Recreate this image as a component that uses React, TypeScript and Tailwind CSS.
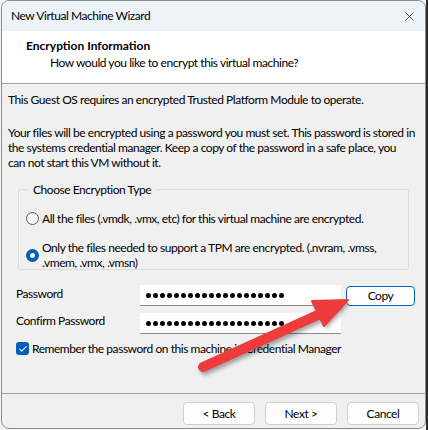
import { X, Check } from "lucide-react";

function Dots() {
  return (
    <div className="flex gap-[2px] items-center">
      {Array.from({ length: 20 }).map((_, i) => (
        <div key={i} className="w-[5px] h-[5px] rounded-full bg-black" />
      ))}
    </div>
  );
}

function Radio({ checked }: { checked?: boolean }) {
  if (checked) {
    return (
      <div className="w-[13px] h-[13px] rounded-full bg-[#005fb8] flex items-center justify-center shrink-0">
        <div className="w-[5px] h-[5px] rounded-full bg-white" />
      </div>
    );
  }
  return <div className="w-[13px] h-[13px] rounded-full border border-[#5a5a5a] bg-[#f6f6f6] shrink-0" />;
}

function WizardButton({ label }: { label: string }) {
  return (
    <button className="w-[72px] h-[23px] rounded-[4px] border border-[#d0d0d0] bg-[#fdfdfd] text-[12px] leading-none">
      {label}
    </button>
  );
}

export default function App() {
  return (
    <div className="relative w-[428px] h-[430px] bg-[#f3f3f3] flex font-['Lato',sans-serif] text-[12px] tracking-[-0.45px] text-black">
      <div className="ml-[1px] w-[425px] h-[429px] border border-[#8c8c8c] rounded-[8px] overflow-hidden flex flex-col bg-[#f0f0f0]">
        {/* title bar */}
        <div className="h-[30px] bg-[#edf3f8] flex items-center justify-between pl-[9px] pr-[8px]">
          <span className="text-[12px]">New Virtual Machine Wizard</span>
          <X size={15} strokeWidth={1.2} className="text-[#222]" />
        </div>

        {/* header */}
        <div className="h-[53px] bg-white border-b border-[#a0a0a0] pt-[7px] pl-[24px] leading-[16px]">
          <p className="font-bold tracking-[0px]">Encryption Information</p>
          <p className="pl-[24px] mt-[1px]">How would you like to encrypt this virtual machine?</p>
        </div>

        {/* body */}
        <div className="flex-1 flex flex-col pt-[8px] leading-[15px]">
          <p className="pl-[6px]">This Guest OS requires an encrypted Trusted Platform Module to operate.</p>
          <p className="pl-[6px] mt-[18px] whitespace-nowrap">
            Your files will be encrypted using a password you must set. This password is stored in
            <br />
            the systems credential manager. Keep a copy of the password in a safe place, you
            <br />
            can not start this VM without it.
          </p>

          <fieldset className="mx-[16px] mt-[12px] h-[88px] border border-[#dcdcdc] rounded-[2px] px-[14px]">
            <legend className="px-[6px] -ml-[6px]">Choose Encryption Type</legend>
            <div className="flex items-center gap-[3px] mt-[14px] -ml-[7px] whitespace-nowrap">
              <Radio />
              <span>All the files (.vmdk, .vmx, etc) for this virtual machine are encrypted.</span>
            </div>
            <div className="flex items-center gap-[3px] mt-[14px] -ml-[7px] whitespace-nowrap">
              <Radio checked />
              <span>
                Only the files needed to support a TPM are encrypted. (.nvram, .vmss,
                <br />
                .vmem, .vmx, .vmsn)
              </span>
            </div>
          </fieldset>

          <div className="flex items-start mt-[15px] pl-[14px]">
            <span className="w-[124px] pt-[1px]">Password</span>
            <div className="w-[201px] h-[21px] bg-white border-b border-[#8a8a8a] flex items-center pl-[6px]">
              <Dots />
            </div>
            <button className="ml-[5px] mt-[1px] w-[69px] h-[20px] rounded-[4px] border border-[#0067c0] bg-white leading-none">
              Copy
            </button>
          </div>

          <div className="flex items-start mt-[7px] pl-[14px]">
            <span className="w-[124px]">Confirm Password</span>
            <div className="w-[201px] h-[21px] bg-white border-b border-[#8a8a8a] flex items-center pl-[6px]">
              <Dots />
            </div>
          </div>

          <div className="flex items-center gap-[3px] mt-[7px] pl-[14px]">
            <div className="w-[13px] h-[13px] rounded-[3px] bg-[#005fb8] flex items-center justify-center">
              <Check size={10} strokeWidth={2.5} className="text-white" />
            </div>
            <span>Remember the password on this machine in Credential Manager</span>
          </div>
        </div>

        {/* footer */}
        <div className="h-[35px] border-t border-[#a0a0a0] flex justify-end items-start gap-[10px] pt-[8px] pr-[6px]">
          <WizardButton label="< Back" />
          <WizardButton label="Next >" />
          <WizardButton label="Cancel" />
        </div>
      </div>
      <div className="w-[2px] bg-[#2a2a2a]" />

      {/* annotation arrow */}
      <svg className="absolute left-0 top-0 pointer-events-none" width="428" height="430" viewBox="0 0 428 430">
        <defs>
          <filter id="sh" x="-20%" y="-20%" width="140%" height="140%">
            <feGaussianBlur stdDeviation="2" />
          </filter>
        </defs>
        <g transform="translate(2 3)" opacity="0.35" filter="url(#sh)">
          <line x1="203" y1="367" x2="322" y2="313" stroke="#000" strokeWidth="10" strokeLinecap="round" />
          <polygon points="348,300 312,301 324,326" fill="#000" />
        </g>
        <line x1="203" y1="367" x2="322" y2="313" stroke="#ee3b3b" strokeWidth="10" strokeLinecap="round" />
        <polygon points="348,300 312,301 324,326" fill="#ee3b3b" stroke="#ee3b3b" strokeWidth="2" strokeLinejoin="round" />
      </svg>
    </div>
  );
}
